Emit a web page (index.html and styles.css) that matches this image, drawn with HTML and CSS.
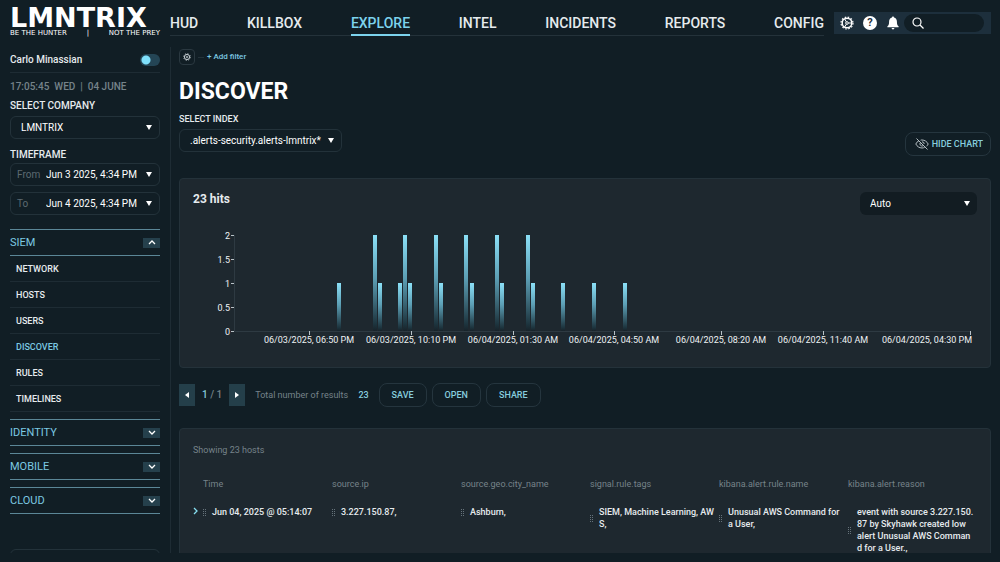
FILE: index.html
```html
<!DOCTYPE html>
<html lang="en">

<head>
    <meta charset="UTF-8">
    <meta name="viewport" content="width=device-width, initial-scale=1.0">
    <title>LMNTRIX | Discover</title>
    <link rel="stylesheet" href="styles.css">
</head>

<body>
    <div class="app">
        <aside class="sidebar">
            <a class="logo" href="#">
                <span class="logo-name">LMNTRIX</span>
                <span class="logo-tagline"><span>BE THE HUNTER</span><span>|</span><span>NOT THE PREY</span></span>
            </a>
            <label class="user">
                Carlo Minassian
                <input type="checkbox" class="toggle" checked>
            </label>
            <div class="date">17:05:45&nbsp; WED &nbsp;|&nbsp; 04 JUNE</div>
            <label class="field-label" for="company">SELECT COMPANY</label>
            <div class="select-box company">
                <select id="company">
                    <option>LMNTRIX</option>
                </select>
            </div>
            <div class="field-label">TIMEFRAME</div>
            <div class="select-box time">
                <label for="from">From</label>
                <select id="from">
                    <option>Jun 3 2025, 4:34 PM</option>
                </select>
            </div>
            <div class="select-box time">
                <label for="to">To</label>
                <select id="to">
                    <option>Jun 4 2025, 4:34 PM</option>
                </select>
            </div>
            <nav class="menu">
                <div class="group">
                    <button class="group-title">SIEM
                        <span class="arrow"><svg viewBox="0 0 8 5"><path d="M1 4l3-3 3 3" /></svg></span>
                    </button>
                    <ul>
                        <li><a href="#">NETWORK</a></li>
                        <li><a href="#">HOSTS</a></li>
                        <li><a href="#">USERS</a></li>
                        <li><a href="#" class="active">DISCOVER</a></li>
                        <li><a href="#">RULES</a></li>
                        <li><a href="#">TIMELINES</a></li>
                    </ul>
                </div>
                <button class="group-title">IDENTITY
                    <span class="arrow"><svg viewBox="0 0 8 5"><path d="M1 1l3 3 3-3" /></svg></span>
                </button>
                <button class="group-title">MOBILE
                    <span class="arrow"><svg viewBox="0 0 8 5"><path d="M1 1l3 3 3-3" /></svg></span>
                </button>
                <button class="group-title">CLOUD
                    <span class="arrow"><svg viewBox="0 0 8 5"><path d="M1 1l3 3 3-3" /></svg></span>
                </button>
            </nav>
            <div class="sidebar-card"></div>
        </aside>

        <div class="page">
            <header class="topbar">
                <nav class="main-nav">
                    <a href="#">HUD</a>
                    <a href="#">KILLBOX</a>
                    <a href="#" class="active">EXPLORE</a>
                    <a href="#">INTEL</a>
                    <a href="#">INCIDENTS</a>
                    <a href="#">REPORTS</a>
                    <a href="#">CONFIG</a>
                </nav>
                <div class="tools">
                    <button class="icon-btn" aria-label="Settings">
                        <svg viewBox="0 0 14 14" fill="none" stroke="#fff">
                            <circle cx="7" cy="7" r="4.8" stroke-width="1.5" />
                            <circle cx="7" cy="7" r="6" stroke-width="1.2" stroke-dasharray="1.6 1.54" />
                            <circle cx="7" cy="7" r="1.3" stroke-width="1" />
                            <path d="M8.4 7h3.4M6.3 5.8L4.6 2.9M6.3 8.2l-1.7 2.9" stroke-width="1" />
                        </svg>
                    </button>
                    <button class="icon-btn help" aria-label="Help">?</button>
                    <button class="icon-btn" aria-label="Notifications">
                        <svg viewBox="0 0 14 14" fill="#fff">
                            <path d="M7 .4c.7 0 1 .5 1 1 1.900.5 2.900 2.100 2.900 4 0 3 .6 4 1.700 4.900v.9H1.400v-.9c1.100-.9 1.700-1.900 1.700-4.900 0-1.900 1-3.500 2.900-4 0-.5.3-1 1-1zM5.600 12h2.800a1.400 1.400 0 0 1-2.800 0z" />
                        </svg>
                    </button>
                    <label class="search">
                        <svg viewBox="0 0 12 12" fill="none" stroke="#fff" stroke-width="1.200">
                            <circle cx="5" cy="5" r="4" />
                            <path d="M8 8l3.500 3.500" />
                        </svg>
                        <input type="search" aria-label="Search">
                    </label>
                </div>
            </header>

            <main class="content">
                <div class="filters">
                    <button class="filter-settings" aria-label="Filter settings">
                        <svg viewBox="0 0 8 8" fill="none" stroke="#c3cbd0">
                            <circle cx="4" cy="4" r="2.600" stroke-width="1" />
                            <circle cx="4" cy="4" r="3.400" stroke-width=".8" stroke-dasharray="1.300 1.370" />
                            <circle cx="4" cy="4" r=".8" stroke-width=".8" />
                        </svg>
                    </button>
                    <span class="dash"></span>
                    <a href="#">+ Add filter</a>
                </div>
                <h1>DISCOVER</h1>
                <div class="index-row">
                    <div>
                        <label class="field-label" for="index">SELECT INDEX</label>
                        <div class="select-box index">
                            <select id="index">
                                <option>.alerts-security.alerts-lmntrix*</option>
                            </select>
                        </div>
                    </div>
                    <button class="btn hide-chart">
                        <svg viewBox="0 0 14 12" fill="none" stroke="#b4bdc2">
                            <path d="M4 2.600C2.500 3.400 1.400 4.700.8 6c1.200 2.400 3.500 4 6.200 4 .9 0 1.800-.2 2.600-.5M5.600 2.200C6 2 6.500 2 7 2c2.700 0 5 1.600 6.200 4-.4.900-1 1.700-1.800 2.300M5.300 4.600a2.200 2.200 0 0 0 3 3.100M7 3.800A2.200 2.200 0 0 1 9.200 6M1.500.5l11 11" />
                        </svg>
                        HIDE CHART
                    </button>
                </div>

                <section class="panel chart-panel">
                    <div class="chart-head">
                        <h2>23 hits</h2>
                        <div class="select-box auto">
                            <select aria-label="Interval">
                                <option>Auto</option>
                            </select>
                        </div>
                    </div>
                    <svg class="chart" viewBox="0 0 784 120">
                        <defs>
                            <linearGradient id="bar" x1="0" y1="0" x2="0" y2="1">
                                <stop offset="0" stop-color="#8be0f7" />
                                <stop offset=".45" stop-color="#5c9fb5" />
                                <stop offset=".93" stop-color="#1d343e" />
                                <stop offset="1" stop-color="#18232a" />
                            </linearGradient>
                        </defs>
                        <path class="axis" d="M41.500 7v96.500H778" />
                        <path class="tick" d="M38 7.500h3M38 31.500h3M38 55.500h3M38 79.500h3M38 103.500h3" />
                        <path class="tick" d="M116.500 103v4M218.500 103v4M320.500 103v4M421.500 103v4M528.500 103v4M630.500 103v4M777.500 103v4" />
                        <g class="y-labels">
                            <text x="37" y="11">2</text>
                            <text x="37" y="35">1.5</text>
                            <text x="37" y="59">1</text>
                            <text x="37" y="83">0.5</text>
                            <text x="37" y="107">0</text>
                        </g>
                        <g class="x-labels">
                            <text x="116" y="115">06/03/2025, 06:50 PM</text>
                            <text x="218" y="115">06/03/2025, 10:10 PM</text>
                            <text x="320" y="115">06/04/2025, 01:30 AM</text>
                            <text x="421" y="115">06/04/2025, 04:50 AM</text>
                            <text x="528" y="115">06/04/2025, 08:20 AM</text>
                            <text x="630" y="115">06/04/2025, 11:40 AM</text>
                            <text x="734" y="115">06/04/2025, 04:30 PM</text>
                        </g>
                        <g fill="url(#bar)">
                            <rect x="144" y="55" width="4" height="48" />
                            <rect x="180" y="7" width="4" height="96" />
                            <rect x="185" y="55" width="4" height="48" />
                            <rect x="205" y="55" width="4" height="48" />
                            <rect x="210" y="7" width="4" height="96" />
                            <rect x="215" y="55" width="4" height="48" />
                            <rect x="241" y="7" width="4" height="96" />
                            <rect x="246" y="55" width="4" height="48" />
                            <rect x="271" y="7" width="4" height="96" />
                            <rect x="277" y="55" width="4" height="48" />
                            <rect x="302" y="7" width="4" height="96" />
                            <rect x="307" y="55" width="4" height="48" />
                            <rect x="333" y="7" width="4" height="96" />
                            <rect x="338" y="55" width="4" height="48" />
                            <rect x="368" y="55" width="4" height="48" />
                            <rect x="399" y="55" width="4" height="48" />
                            <rect x="430" y="55" width="4" height="48" />
                        </g>
                    </svg>
                </section>

                <div class="results-bar">
                    <div class="pager">
                        <button aria-label="Previous page"><svg viewBox="0 0 6 6"><path d="M5 0v6L1 3z" /></svg></button>
                        <span><b>1</b> / 1</span>
                        <button aria-label="Next page"><svg viewBox="0 0 6 6"><path d="M1 0v6l4-3z" /></svg></button>
                    </div>
                    <div class="total">Total number of results <b>23</b></div>
                    <div class="actions">
                        <button class="btn">SAVE</button>
                        <button class="btn">OPEN</button>
                        <button class="btn">SHARE</button>
                    </div>
                </div>

                <section class="panel table-panel">
                    <p>Showing 23 hosts</p>
                    <table>
                        <thead>
                            <tr>
                                <th class="expand"></th>
                                <th>Time</th>
                                <th>source.ip</th>
                                <th>source.geo.city_name</th>
                                <th>signal.rule.tags</th>
                                <th>kibana.alert.rule.name</th>
                                <th>kibana.alert.reason</th>
                            </tr>
                        </thead>
                        <tbody>
                            <tr>
                                <td class="expand"><button aria-label="Expand row"><svg viewBox="0 0 6 8"><path d="M1 1l3 3-3 3" /></svg></button></td>
                                <td><div class="cell"><i class="grip"></i>Jun 04, 2025 @ 05:14:07</div></td>
                                <td><div class="cell"><i class="grip"></i>3.227.150.87,</div></td>
                                <td><div class="cell"><i class="grip"></i>Ashburn,</div></td>
                                <td><div class="cell"><i class="grip"></i><span>SIEM, Machine Learning, AW<br>S,</span></div></td>
                                <td><div class="cell"><i class="grip"></i><span>Unusual AWS Command for<br>a User,</span></div></td>
                                <td><div class="cell"><i class="grip"></i><span>event with source 3.227.150.<br>87 by Skyhawk created low<br>alert Unusual AWS Comman<br>d for a User.,</span></div></td>
                            </tr>
                        </tbody>
                    </table>
                </section>
            </main>
        </div>
    </div>
</body>

</html>
```
FILE: styles.css
```css
* {
    box-sizing: border-box;
}

body {
    margin: 0;
    height: 100vh;
    padding-bottom: 9px;
    background-color: #111e25;
    color: #e6ebee;
    font-family: Roboto, "Liberation Sans", sans-serif;
    font-size: 10px;
    line-height: 12px;
    font-weight: 500;
}

a {
    color: inherit;
    text-decoration: none;
}

button,
input,
select {
    margin: 0;
    padding: 0;
    border: none;
    background: none;
    color: inherit;
    font: inherit;
}

button {
    cursor: pointer;
}

.app {
    display: grid;
    grid-template-columns: 170px 1fr;
    height: 100%;
    overflow: hidden;
}

/* sidebar */
.sidebar {
    padding: 0 10px;
    display: flex;
    flex-direction: column;
}

.logo {
    height: 47px;
    padding-top: 6px;
    display: flex;
    flex-direction: column;
    color: #fff;
}

.logo-name {
    font-family: "DejaVu Sans", sans-serif;
    font-size: 27px;
    line-height: 23px;
    font-weight: bold;
}

.logo-tagline {
    display: flex;
    justify-content: space-between;
    font-family: "DejaVu Sans", sans-serif;
    font-size: 7px;
    line-height: 8px;
    font-weight: normal;
}

.user {
    height: 26px;
    border-bottom: 1px solid #1e2c34;
    display: flex;
    justify-content: space-between;
    align-items: center;
}

.toggle {
    appearance: none;
    width: 20px;
    height: 12px;
    border-radius: 6px;
    background: radial-gradient(circle at 6px 6px, #7fe0fb 4px, #244555 5px);
}

.date {
    padding: 8px 0 7px;
    color: #76838a;
}

.field-label {
    display: block;
    line-height: 12px;
}

.select-box {
    position: relative;
    display: flex;
    align-items: center;
    height: 23px;
    border: 1px solid #23323a;
    border-radius: 6px;
}

.select-box::after {
    content: "";
    position: absolute;
    right: 7px;
    border: 3px solid transparent;
    border-top: 5px solid #fff;
    border-bottom: none;
    pointer-events: none;
}

.select-box select {
    appearance: none;
    flex: 1;
    height: 100%;
    padding: 0 10px;
    font-weight: 400;
    color: #fff;
}

.company {
    margin: 4px 0 10px;
}

.time {
    margin-top: 2px;
}

.time + .time {
    margin-top: 6px;
}

.time label {
    width: 29px;
    padding-left: 6px;
    color: #5d6a72;
    font-weight: 400;
}

.time select {
    padding: 0 6px;
}

.menu {
    margin-top: 14px;
    display: flex;
    flex-direction: column;
    gap: 7px;
}

.group-title {
    width: 100%;
    height: 27px;
    border-top: 1px solid #5b8797;
    border-bottom: 1px solid #5b8797;
    display: flex;
    justify-content: space-between;
    align-items: center;
    color: #7cc9e2;
    font-size: 11px;
    font-weight: 400;
}

.arrow {
    width: 17px;
    height: 10px;
    background-color: #25404c;
    display: flex;
    justify-content: center;
    align-items: center;
}

.arrow svg {
    width: 8px;
    height: 5px;
    fill: none;
    stroke: #fff;
    stroke-width: 1.3;
}

.menu ul {
    margin: 0;
    padding: 0;
    list-style: none;
}

.menu li {
    height: 26px;
    padding: 7px 6px;
    border-bottom: 1px solid #1e2c34;
    font-size: 9px;
}

.menu .active {
    color: #7cc9e2;
}

.sidebar-card {
    margin-top: 35px;
    height: 40px;
    border: 1px solid #23323a;
    border-radius: 6px;
}

/* top bar */
.page {
    min-width: 0;
    display: flex;
    flex-direction: column;
}

.topbar {
    height: 47px;
    padding: 12px 9px 0 0;
    display: flex;
    align-items: flex-start;
    gap: 10px;
}

.main-nav {
    flex: 1;
    height: 24px;
    border-bottom: 1px solid #24323a;
    display: flex;
    justify-content: space-between;
    font-size: 14px;
    line-height: 22px;
}

.main-nav .active {
    height: 24px;
    color: #7cd3ed;
    border-bottom: 2px solid #7cd3ed;
}

.tools {
    height: 22px;
    padding: 0 7px 0 6px;
    background-color: #1d2f3c;
    display: flex;
    align-items: center;
    gap: 9px;
}

.icon-btn {
    width: 14px;
    height: 14px;
}

.icon-btn svg {
    display: block;
    width: 14px;
    height: 14px;
}

.help {
    border-radius: 50%;
    background-color: #fff;
    color: #1d2f3c;
    font-size: 11px;
    line-height: 14px;
    font-weight: bold;
}

.search {
    width: 80px;
    height: 18px;
    margin-left: -5px;
    padding: 0 8px;
    border-radius: 9px;
    background-color: #111e25;
    display: flex;
    align-items: center;
}

.search svg {
    width: 12px;
    height: 12px;
    flex-shrink: 0;
}

.search input {
    width: 100%;
    min-width: 0;
}

/* content */
.content {
    flex: 1;
    min-height: 0;
    padding: 2px 9px 0 8px;
    border-left: 1px solid #1e2c34;
    display: flex;
    flex-direction: column;
}

.filters {
    height: 16px;
    display: flex;
    align-items: center;
    color: #7cc9e2;
    font-size: 8px;
}

.filter-settings {
    width: 16px;
    height: 16px;
    border: 1px solid #2a3840;
    border-radius: 4px;
    display: flex;
    align-items: center;
    justify-content: center;
}

.filter-settings svg {
    width: 8px;
    height: 8px;
}

.dash {
    width: 6px;
    margin: 0 3px;
    border-top: 1px solid #24323a;
}

h1 {
    margin: 15px 0 9px;
    color: #fff;
    font-size: 23px;
    line-height: 24px;
    font-weight: bold;
}

.index-row {
    display: flex;
    justify-content: space-between;
    align-items: flex-end;
}

.index-row .field-label {
    font-size: 9px;
}

.index {
    width: 163px;
    margin: 4px 0;
}

.btn {
    height: 24px;
    padding: 0 12px;
    border: 1px solid #25353e;
    border-radius: 8px;
    color: #86ccdd;
    font-size: 9px;
}

.hide-chart {
    padding: 0 7px 0 9px;
    display: flex;
    align-items: center;
    gap: 3px;
}

.hide-chart svg {
    width: 14px;
    height: 12px;
}

.panel {
    border: 1px solid #24323a;
    border-radius: 4px;
    background-color: #1e282f;
}

.chart-panel {
    margin-top: 22px;
    padding: 13px;
}

.chart-head {
    display: flex;
    justify-content: space-between;
}

h2 {
    margin: 0;
    font-size: 12px;
    line-height: 14px;
    font-weight: bold;
}

.auto {
    width: 117px;
    border: none;
    background-color: #121c22;
}

.chart {
    display: block;
    width: 100%;
    margin: 13px 0 6px;
}

.chart text {
    fill: #eef2f4;
    font-size: 9px;
    font-weight: 400;
}

.chart .x-labels {
    text-anchor: middle;
}

.chart .y-labels {
    text-anchor: end;
}

.axis {
    fill: none;
    stroke: #2e3a42;
}

.tick {
    stroke: #b9c2c7;
}

.results-bar {
    margin: 15px 0 21px;
    display: flex;
    align-items: center;
    gap: 10px;
    color: #76838a;
}

.results-bar b {
    color: #86ccdd;
    font-weight: 500;
}

.pager {
    display: flex;
    align-items: center;
    gap: 7px;
}

.pager button {
    width: 16px;
    height: 22px;
    background-color: #243f4a;
}

.pager svg {
    width: 6px;
    height: 6px;
    fill: #fff;
}

.total {
    font-size: 9px;
    font-weight: 400;
}

.total b {
    margin-left: 8px;
}

.actions {
    display: flex;
    gap: 5px;
}

.table-panel {
    flex: 1 0 auto;
    padding: 15px 13px 0;
    font-size: 9px;
}

.table-panel p {
    margin: 0 0 22px;
    color: #76838a;
    font-weight: 400;
}

table {
    width: 100%;
    table-layout: fixed;
    border-collapse: collapse;
}

th,
td {
    padding: 0;
    text-align: left;
    white-space: nowrap;
}

th {
    padding-bottom: 16px;
    color: #76838a;
    font-weight: 400;
}

td {
    height: 48px;
    vertical-align: top;
}

.expand {
    width: 10px;
}

.expand button {
    display: block;
    height: 12px;
}

.expand svg {
    width: 6px;
    height: 8px;
    fill: none;
    stroke: #86dff0;
    stroke-width: 1.3;
}

.cell {
    display: flex;
    align-items: center;
    gap: 6px;
}

.grip {
    width: 3px;
    height: 7px;
    flex-shrink: 0;
    border-left: 1px dotted #66737b;
    border-right: 1px dotted #66737b;
}
```
